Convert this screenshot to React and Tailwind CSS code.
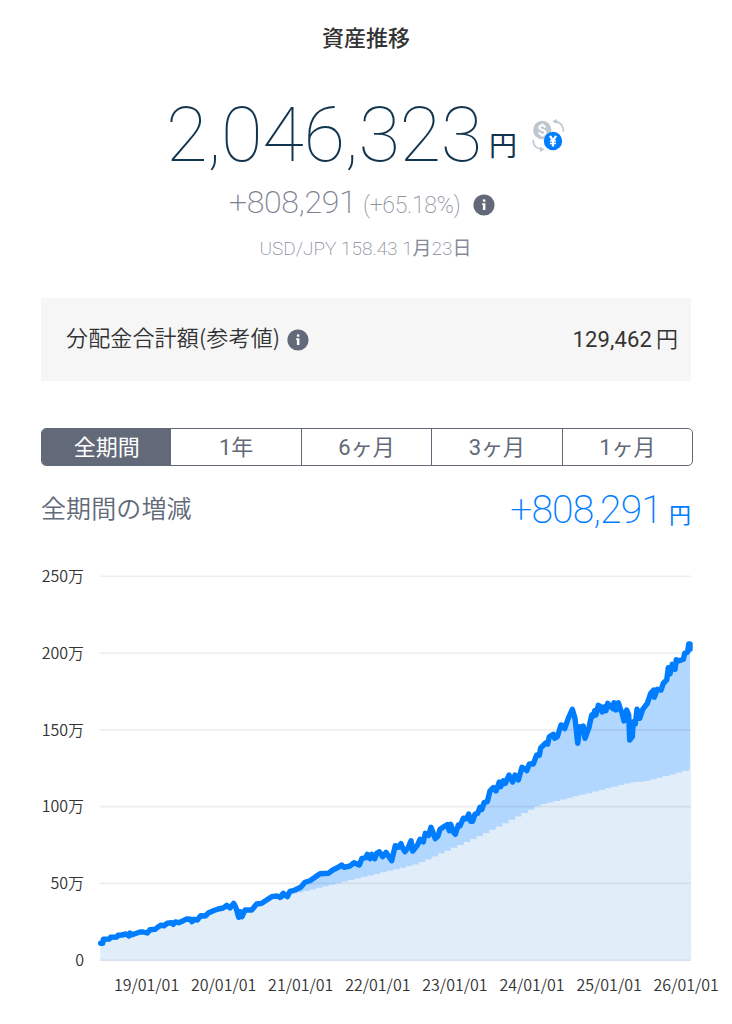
import React from "react";

const LINE = [
  // [originX, originY, points in thirds of a pixel]
  [90, 860, [[32,250],[38,250],[40,238],[58,237],[62,232],[80,231],[84,226],[95,225],[108,222],[117,228],[120,219],[126,224],[150,216],[160,216],[172,219],[180,209],[196,208],[203,202],[212,196],[222,197],[232,190],[245,188],[250,193],[256,186],[266,188],[280,182],[290,177],[302,178],[306,185],[312,178],[322,180],[332,167],[346,168],[356,158],[370,152],[384,147],[400,144],[410,136],[420,144],[431,130],[438,143],[446,172],[450,155],[456,170],[465,150],[485,150],[500,132],[515,130],[530,120],[545,110],[560,108],[572,112],[582,103]]],
  [280, 810, [[0,262],[10,250],[22,260],[30,244],[45,240],[62,232],[75,217],[90,212],[105,202],[120,191],[145,190],[158,180],[175,172],[185,165],[192,172],[210,168],[222,158],[238,165],[246,145],[258,143],[262,133],[270,146],[275,133],[284,146],[290,130],[298,125],[308,140],[318,127],[335,152],[346,107],[355,112],[363,101],[368,115],[375,125],[385,112],[393,92],[398,123],[412,106],[420,88],[430,96],[436,70],[446,76],[453,52],[466,86],[474,78],[480,58],[495,48],[502,44],[508,62],[512,43],[520,66],[526,73],[535,45]]],
  [460, 690, [[0,408],[10,385],[20,386],[26,372],[32,394],[38,394],[45,372],[53,370],[60,352],[66,358],[72,338],[82,335],[90,303],[100,293],[108,303],[118,276],[122,290],[130,272],[136,280],[147,255],[158,276],[165,255],[175,270],[186,232],[194,236],[200,242],[208,222],[220,222],[230,195],[238,196],[242,174],[258,158],[263,162],[268,140],[280,133],[284,145],[292,140],[303,105],[308,106],[314,116],[325,85],[337,58],[345,85],[353,160],[360,110],[366,122],[370,108],[375,145],[387,112],[395,75],[400,78],[404,62],[408,75],[415,46],[422,50],[427,66],[434,50],[438,62],[443,40],[450,48],[459,56],[462,38],[468,60],[475,38],[482,60]]],
  [560, 620, [[186,278],[192,303],[200,270],[206,285],[209,360],[217,350],[220,305],[226,312],[231,268],[239,295],[248,268],[262,250],[272,220],[281,210],[283,232],[292,208],[303,210],[310,190],[320,180],[325,143],[330,162],[337,133],[345,148],[349,119],[358,122],[370,118],[374,100],[383,96],[386,72],[390,72],[390,88]]],
];

const points = LINE.flatMap(([ox, oy, pts]) => pts.map(([x, y]) => [ox + x / 3, oy + y / 3]));
const path = points.map(([x, y]) => `${x.toFixed(1)},${y.toFixed(1)}`).join(" ");

const BASE = [[284, 896], [300, 892.5], [416, 864.5], [436, 856], [479, 836.5], [504, 824], [540, 805], [590, 793], [631, 782.5], [645, 781.5], [691, 769.5]];
function baseAt(x) {
  for (let i = 1; i < BASE.length; i++) {
    if (x <= BASE[i][0]) {
      const [a, b] = [BASE[i - 1], BASE[i]];
      return a[1] + ((b[1] - a[1]) * (x - a[0])) / (b[0] - a[0]);
    }
  }
  return BASE[BASE.length - 1][1];
}
const steps = [];
for (let x = 284; x < 690.5; x += 6.42) {
  const y = baseAt(x + 3.2).toFixed(1);
  steps.push(`${x.toFixed(1)},${y}`, `${Math.min(x + 6.42, 690.8).toFixed(1)},${y}`);
}
const basePath = points.filter(([x]) => x < 284).map(([x, y]) => `${x.toFixed(1)},${(y + 1).toFixed(1)}`).concat(steps).join(" ");

const GRID = [576.2, 653.1, 729.9, 806.6, 883.4, 960.3];
const Y_LABELS = ["250万", "200万", "150万", "100万", "50万", "0"];
const X_LABELS = ["19/01/01", "20/01/01", "21/01/01", "22/01/01", "23/01/01", "24/01/01", "25/01/01", "26/01/01"];
const TABS = ["全期間", "1年", "6ヶ月", "3ヶ月", "1ヶ月"];

function Info() {
  return (
    <svg className="block h-[22px] w-[22px] shrink-0" viewBox="0 0 22 22">
      <circle cx="11" cy="11" r="10.6" fill="#626978" />
      <rect x="9.9" y="5.4" width="2.5" height="2.3" fill="#fff" />
      <path d="M9.2 9.2H12.4V16H9.9V10.9H9.2Z" fill="#fff" />
    </svg>
  );
}

function CurrencySwitch() {
  return (
    <svg className="block h-[36px] w-[36px] shrink-0" viewBox="0 0 36 36">
      <circle cx="12.3" cy="12" r="9.2" fill="#bec6ce" />
      <path d="M15.3 9.6C14.8 8.2 13.7 7.5 12.3 7.5C10.6 7.5 9.4 8.3 9.4 9.6C9.4 12.8 15.4 11.2 15.4 14.4C15.4 15.9 14.1 16.7 12.4 16.7C10.8 16.7 9.5 16 9.1 14.3M12.4 5.6V7.6M12.4 16.5V18.5" stroke="#fff" strokeWidth="2.1" fill="none" />
      <path d="M25 3.4C30 4 33.2 7.4 33.5 13.8M3 21.8C3.2 27 6.2 30.6 11.2 31" stroke="#bec6ce" strokeWidth="1.6" fill="none" />
      <path d="M22.3 3.2L27 1L26.6 5.8ZM14.6 31.6L9.8 34L10.4 28.8Z" fill="#bec6ce" />
      <circle cx="23" cy="23" r="9.2" fill="#007dff" />
      <path d="M20 17.8L23 22.6L26 17.8M23 22V28.4" stroke="#fff" strokeWidth="2.3" fill="none" />
      <path d="M19.9 23H26.1M19.9 25.5H26.1" stroke="#fff" strokeWidth="1.5" fill="none" />
    </svg>
  );
}

export default function App() {
  return (
    <main className="flex h-[1024px] w-[732px] flex-col overflow-hidden bg-white font-[Roboto,'Noto_Sans_CJK_JP',sans-serif] text-[#333]">
      <h1 className="flex h-[76px] items-center justify-center pt-px text-[22px] font-medium leading-none">資産推移</h1>

      <section className="flex h-[222px] flex-col">
        <div className="flex h-[106px] items-end pl-[166px] text-[#12354f]">
          <span className="w-[323px] whitespace-nowrap pb-[3px] text-[76px] font-[130] leading-[88px] tracking-[-0.4px]">2,046,323</span>
          <span className="pb-[19px] text-[28px] leading-[32px]">円</span>
          <span className="mb-[28px] ml-[13px]"><CurrencySwitch /></span>
        </div>
        <div className="flex h-[44px] items-center pb-[5px] pl-[229px] text-[#8a909d]">
          <span className="w-[134px] whitespace-nowrap text-[32px] font-extralight leading-none tracking-[-0.3px] text-[#7b8190]">+808,291</span>
          <span className="w-[110px] whitespace-nowrap pt-[7px] text-[23px] font-extralight leading-none tracking-[-0.3px] text-[#8d93a0]">(+65.18%)</span>
          <span className="pt-[7px]"><Info /></span>
        </div>
        <p className="flex h-[44px] items-center justify-center whitespace-pre pr-px text-[19px] font-extralight leading-none text-[#858b99]">USD/JPY 158.43 1<span className="font-normal">月</span>23<span className="font-normal">日</span></p>
      </section>

      <section className="ml-[41px] flex h-[83px] w-[650px] items-center bg-[#f6f6f6] pl-[25px] pr-[13px] text-[22px]">
        <span className="pb-[7px] font-['Noto_Sans_CJK_JP',sans-serif] font-[350] leading-none tracking-[0.15px]">分配金合計額(参考値)</span>
        <span className="ml-[7px]"><Info /></span>
        <span className="ml-auto flex items-baseline"><span className="font-[370] tracking-[0.15px]">129,462</span><span className="ml-[4px] font-[350]">円</span></span>
      </section>

      <nav className="ml-[41px] mt-[47px] flex h-[38px] w-[652px] overflow-hidden rounded-[5px] border-[1.5px] border-[#626978] text-[22px] text-[#626978]">
        {TABS.map((label, i) => (
          <button key={label} className={i === 0 ? "flex-1 bg-[#626978] pt-px font-[370] leading-none text-white" : i === 1 ? "flex-1 pt-px font-[370] leading-none" : "flex-1 border-l border-[#626978] pt-px font-[370] leading-none"}>{label}</button>
        ))}
      </nav>

      <section className="mx-[41px] flex h-[88px] items-center justify-between">
        <h2 className="pb-[5px] font-['Noto_Sans_CJK_JP',sans-serif] text-[25px] font-[350] leading-none tracking-[0.1px] text-[#626978]">全期間の増減</h2>
        <div className="flex items-baseline pt-px text-[#007dff]">
          <span className="text-[39px] font-extralight leading-none tracking-[-0.8px]">+808,291</span>
          <span className="ml-[7px] text-[22px] leading-none">円</span>
        </div>
      </section>

      <section className="flex h-[412px] font-['Noto_Sans_CJK_JP',sans-serif] text-[16px] font-[350] leading-none text-[#333]">
        <div className="mt-[13px] flex h-[399px] w-[84px] shrink-0 flex-col items-end">
          {Y_LABELS.map((label) => (
            <span key={label} className="flex h-[76.8px] shrink-0 items-start">{label}</span>
          ))}
        </div>
        <svg className="h-[412px] w-[648px] shrink-0" viewBox="84 554 648 412">
          <polygon points={`100.7,960.3 ${path} 690.8,960.3`} fill="#b2d7ff" />
          <polygon points={`100.7,960.3 ${basePath} 690.8,960.3`} fill="#e1edf9" />
          {GRID.map((y) => (
            <line key={y} x1="100" x2="691" y1={y} y2={y} stroke="#000" strokeOpacity="0.065" strokeWidth="1.6" />
          ))}
          <polyline points={path} fill="none" stroke="#007dff" strokeWidth="5.4" strokeLinejoin="round" strokeLinecap="round" />
        </svg>
      </section>

      <div className="ml-[108px] mt-[10px] flex font-['Noto_Sans_CJK_JP',sans-serif] text-[16px] font-[350] leading-none text-[#333]">
        {X_LABELS.map((label) => (
          <span key={label} className="w-[77.1px] shrink-0 text-center">{label}</span>
        ))}
      </div>
    </main>
  );
}
